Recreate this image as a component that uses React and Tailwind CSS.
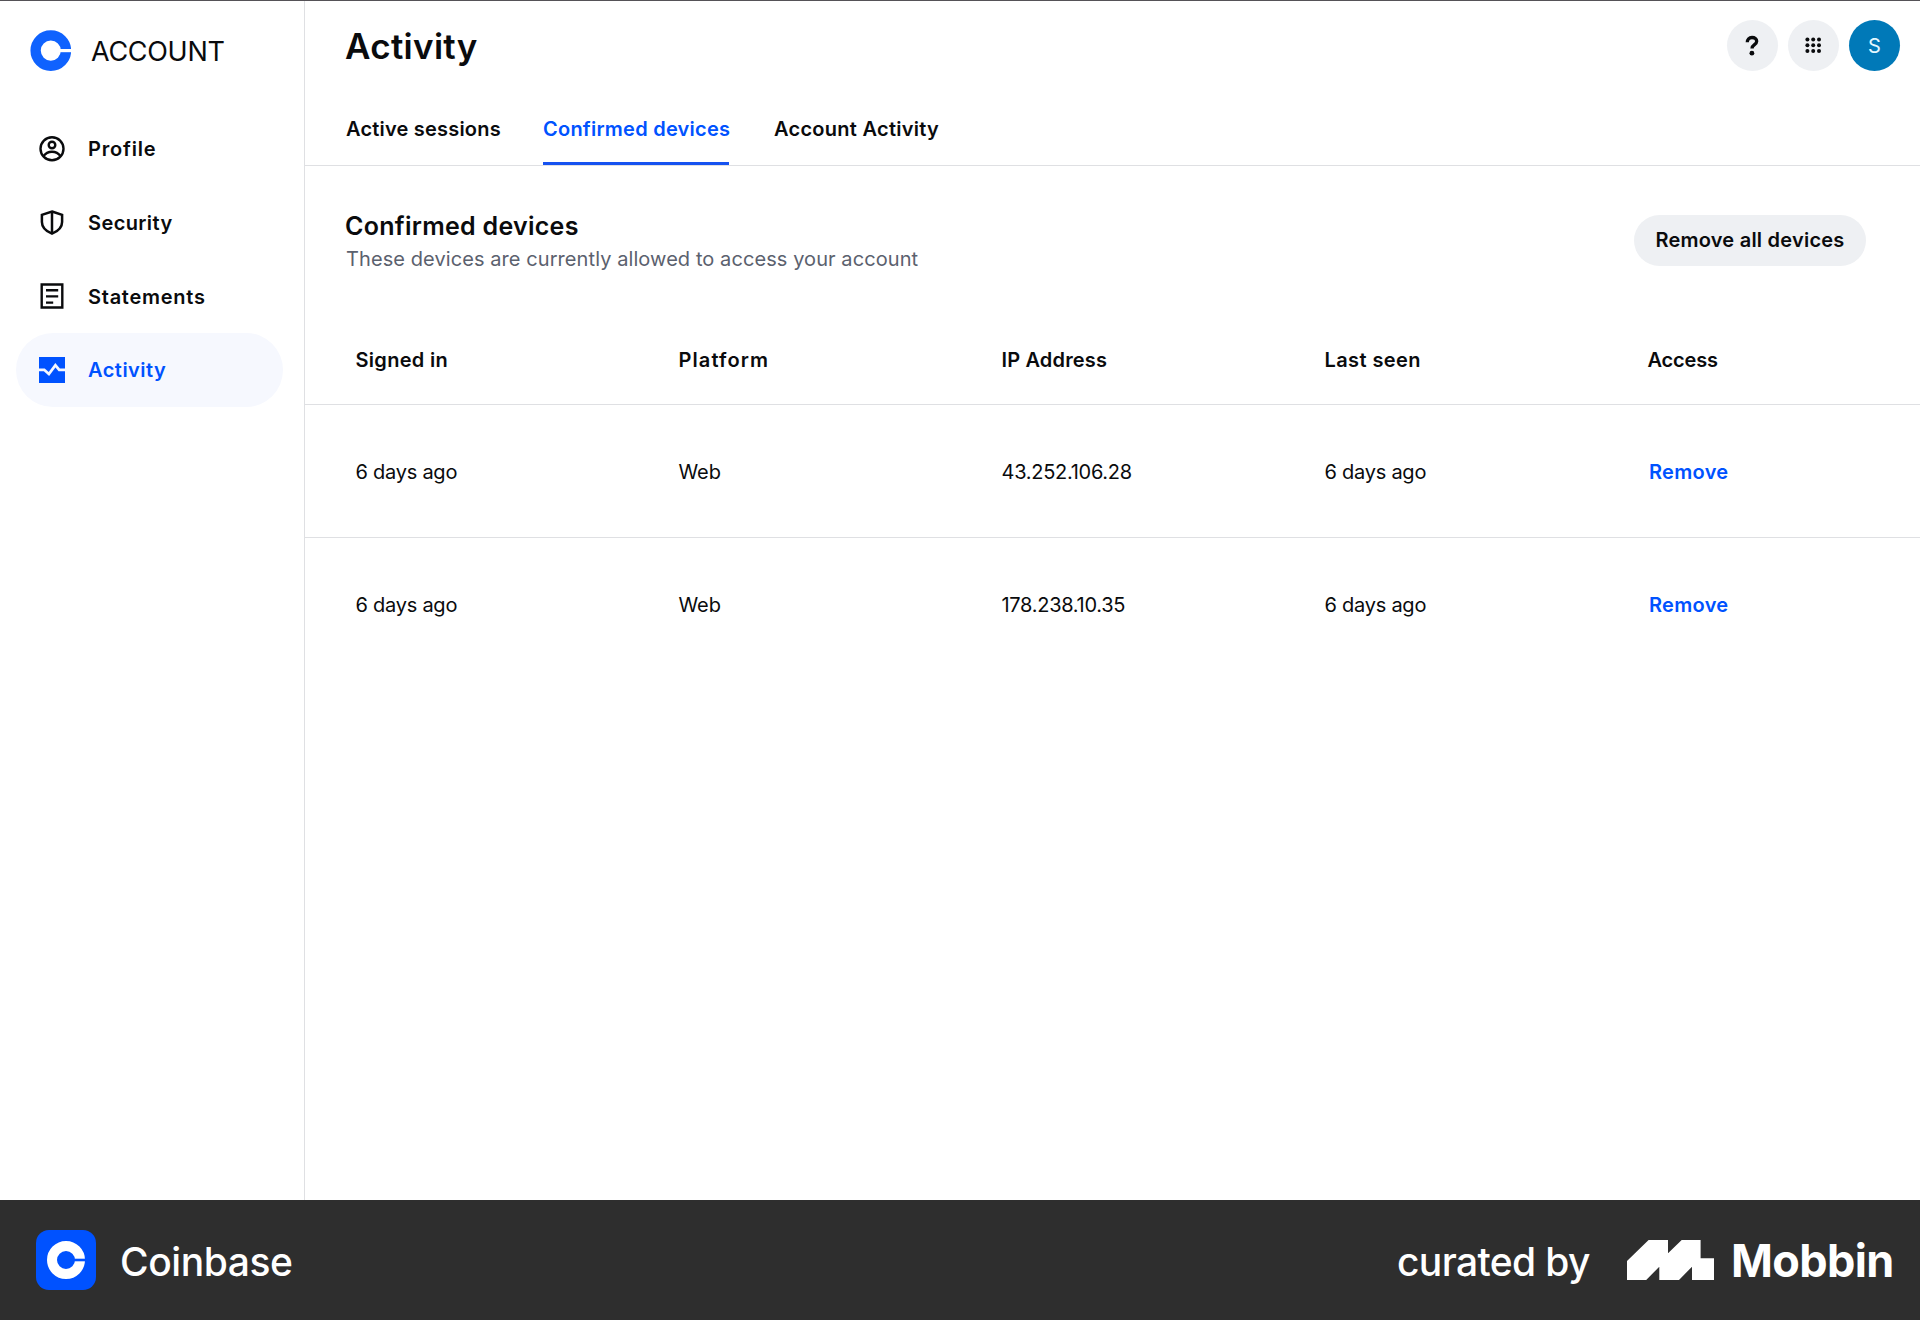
import React from "react";

function ProfileIcon() {
  return (
    <svg width="26" height="26" viewBox="0 0 26 26" fill="none" stroke="currentColor" strokeWidth="2.4">
      <circle cx="13" cy="12.800" r="11.5" />
      <circle cx="13" cy="9" r="3.300" />
      <path d="M4.400 20.400C6.400 17.400 9.400 15.800 13 15.800s6.600 1.600 8.600 4.600" />
    </svg>
  );
}

function ShieldIcon() {
  return (
    <svg width="26" height="26" viewBox="0 0 26 26" fill="none" stroke="currentColor" strokeWidth="2.500">
      <path d="M13 1.500 23.100 4.800V12c0 5.200-3.600 9.100-10.100 11.700C6.500 21.100 2.900 17.200 2.900 12V4.800Z" />
      <path d="M13 1.500v22" />
    </svg>
  );
}

function StatementIcon() {
  return (
    <svg width="26" height="26" viewBox="0 0 26 26" fill="none" stroke="currentColor" strokeWidth="2.400">
      <path d="M2.700 1.500h20.600v23H2.700zM7 7.200h12.200M7 13.400h12.200M7 19.600h7.200" />
    </svg>
  );
}

function ActivityIcon() {
  return (
    <svg width="26" height="26" viewBox="0 0 26 26">
      <path d="M0 0h26v26H0z" fill="currentColor" />
      <path d="M0 12.800h5.200l4.700 4.200 6.500-8.800 3.800 4.600H26" fill="none" stroke="#f6f8fe" strokeWidth="2.800" />
    </svg>
  );
}

const nav = [
  { label: "Profile", Icon: ProfileIcon, text: "tracking-[0.8px]" },
  { label: "Security", Icon: ShieldIcon, text: "tracking-[0.4px]" },
  { label: "Statements", Icon: StatementIcon, text: "pt-px tracking-[0.74px]" },
  { label: "Activity", Icon: ActivityIcon, text: "tracking-[0.48px]", active: true },
];

const columns = [
  { label: "Signed in", text: "tracking-[0.3px]" },
  { label: "Platform", text: "tracking-[1.1px]" },
  { label: "IP Address", text: "tracking-[0.16px]" },
  { label: "Last seen", text: "tracking-[0.4px]" },
  { label: "Access", text: "tracking-[-0.15px]" },
];

const devices = [
  { signedIn: "6 days ago", platform: "Web", ip: "43.252.106.28", seen: "6 days ago" },
  { signedIn: "6 days ago", platform: "Web", ip: "178.238.10.35", seen: "6 days ago" },
];

function Sidebar() {
  return (
    <aside className="flex w-[305px] shrink-0 flex-col border-r border-[#dfe0e3]">
      <div className="mt-[29px] flex h-[42px] items-start pl-[30px]">
        <svg width="41" height="41" viewBox="0 0 41 41" fill="none">
          <circle cx="20.800" cy="20.600" r="15.200" stroke="#0f62fe" strokeWidth="10.300" />
          <path d="M29 19h12v3.200H29z" fill="#fff" />
        </svg>
        <span className="ml-5 mt-[8px] text-[27px] leading-none tracking-[-0.300px]">ACCOUNT</span>
      </div>
      <nav className="mt-[40px] flex flex-col pl-4">
        {nav.map(({ label, Icon, text, active }) => (
          <a
            key={label}
            className={
              active
                ? "flex h-[74px] w-[267px] items-center gap-[23px] rounded-[37px] bg-[#f6f8fe] pl-[23px] text-[#0052ff]"
                : "flex h-[73.700px] w-[267px] items-center gap-[23px] pl-[23px]"
            }
          >
            <Icon />
            <span className={"text-[20px] font-semibold leading-none " + text}>{label}</span>
          </a>
        ))}
      </nav>
    </aside>
  );
}

function TopActions() {
  return (
    <div className="flex gap-[10px] pr-5 pt-[19px]">
      <button className="flex size-[51px] items-center justify-center rounded-full bg-[#eef0f3]">
        <svg width="15" height="22" viewBox="0 0 15 22" fill="none">
          <path d="M2.300 7.300C2.300 4.400 4.100 2.500 7 2.500c2.800 0 4.700 1.500 4.700 3.800 0 3.400-4.700 3.200-4.700 7.100" stroke="currentColor" strokeWidth="3.300" />
          <circle cx="6.900" cy="18.200" r="2.400" fill="currentColor" />
        </svg>
      </button>
      <button className="flex size-[51px] items-center justify-center rounded-full bg-[#eef0f3]">
        <svg width="17" height="17" viewBox="0 0 17 17" fill="currentColor">
          {[2.4, 8.2, 14].map((y) => [2.4, 8.2, 14].map((x) => <circle key={x + "-" + y} cx={x} cy={y} r="2" />))}
        </svg>
      </button>
      <div className="flex size-[51px] items-center justify-center rounded-full bg-[#0079b8] text-[20px] text-[#e4f8ff]">S</div>
    </div>
  );
}

function Footer() {
  return (
    <footer className="flex h-[120px] items-center bg-[#2e2e2e] text-white">
      <div className="ml-9 flex size-[60px] items-center justify-center rounded-[13px] bg-[#0052ff]">
        <svg width="38" height="38" viewBox="0 0 38 38" fill="none">
          <circle cx="19" cy="19" r="14" stroke="#fff" strokeWidth="10" />
          <path d="M26 17.700h12v2.600H26z" fill="#0052ff" />
        </svg>
      </div>
      <span className="ml-6 mt-[3px] text-[39px] font-medium leading-none tracking-[-0.440px]">Coinbase</span>
      <span className="ml-auto mt-[3px] w-[230px] text-[39px] font-medium leading-none tracking-[-0.640px]">curated by</span>
      <svg width="87" height="40" viewBox="0 0 87 40" fill="currentColor">
        <path d="M0 21 21.600 0H41v13.300L54.700 0h18.900v18.300H87V40H65V26.700L52 40H32.300V26.700L19.200 40H0z" />
      </svg>
      <span className="ml-[17px] mt-px w-[189px] text-[45px] font-bold leading-none tracking-[-0.650px]">Mobbin</span>
    </footer>
  );
}

export default function App() {
  return (
    <div className="flex h-[1320px] w-[1920px] flex-col overflow-hidden bg-white font-['Inter',sans-serif] text-[#0a0b0d]">
      <div className="h-px bg-[#555257]" />
      <div className="flex min-h-0 flex-1">
        <Sidebar />
        <main className="flex flex-1 flex-col">
          <header className="flex h-[165px] flex-col border-b border-[#dfe0e3]">
            <div className="flex h-[91px] justify-between">
              <h1 className="pl-[40px] pt-[27px] text-[35px] font-semibold leading-[36px] tracking-[0.3px]">Activity</h1>
              <TopActions />
            </div>
            <div className="flex h-[73px] pl-[41px] text-[20px] font-semibold leading-none">
              <span className="flex w-[197px] pt-[27px] tracking-[0.2px]">Active sessions</span>
              <span className="flex w-[186px] whitespace-nowrap border-b-[3px] border-[#1652f0] pt-[27px] tracking-[0.24px] text-[#0052ff]">
                Confirmed devices
              </span>
              <span className="ml-[45px] pt-[27px] tracking-[0.27px]">Account Activity</span>
            </div>
          </header>

          <section className="flex h-[148px] items-start justify-between pl-[41px] pr-[54px] pt-[47px]">
            <div>
              <h2 className="-ml-px text-[25px] font-semibold leading-[26px] tracking-[0.28px]">Confirmed devices</h2>
              <p className="mt-[10px] text-[20px] leading-[20px] tracking-[0.080px] text-[#5b616e]">
                These devices are currently allowed to access your account
              </p>
            </div>
            <button className="mt-[2px] h-[51px] w-[232px] rounded-full bg-[#eef0f3] pb-px text-[20px] font-semibold leading-none tracking-[0.23px]">
              Remove all devices
            </button>
          </section>

          <div className="grid h-[91px] grid-cols-5 border-b border-[#dfe0e3] pt-[36px] text-[20px] font-semibold leading-none">
            {columns.map((c) => (
              <span key={c.label} className={"pl-[50.5px] " + c.text}>{c.label}</span>
            ))}
          </div>
          {devices.map((d, i) => (
            <div
              key={d.ip}
              className={
                "grid grid-cols-5 items-center border-[#dfe0e3] text-[20px] leading-none " +
                (i === 0 ? "h-[133px] border-b pt-[2px]" : "h-[133px]")
              }
            >
              <span className="pl-[50.5px] tracking-[-0.25px]">{d.signedIn}</span>
              <span className="pl-[50.5px] tracking-[-0.1px]">{d.platform}</span>
              <span className="pl-[50.5px] tracking-[-0.280px]">{d.ip}</span>
              <span className="pl-[50.5px] tracking-[-0.25px]">{d.seen}</span>
              <a className="pl-[52px] font-semibold tracking-[0.3px] text-[#0052ff]">Remove</a>
            </div>
          ))}
        </main>
      </div>
      <Footer />
    </div>
  );
}
